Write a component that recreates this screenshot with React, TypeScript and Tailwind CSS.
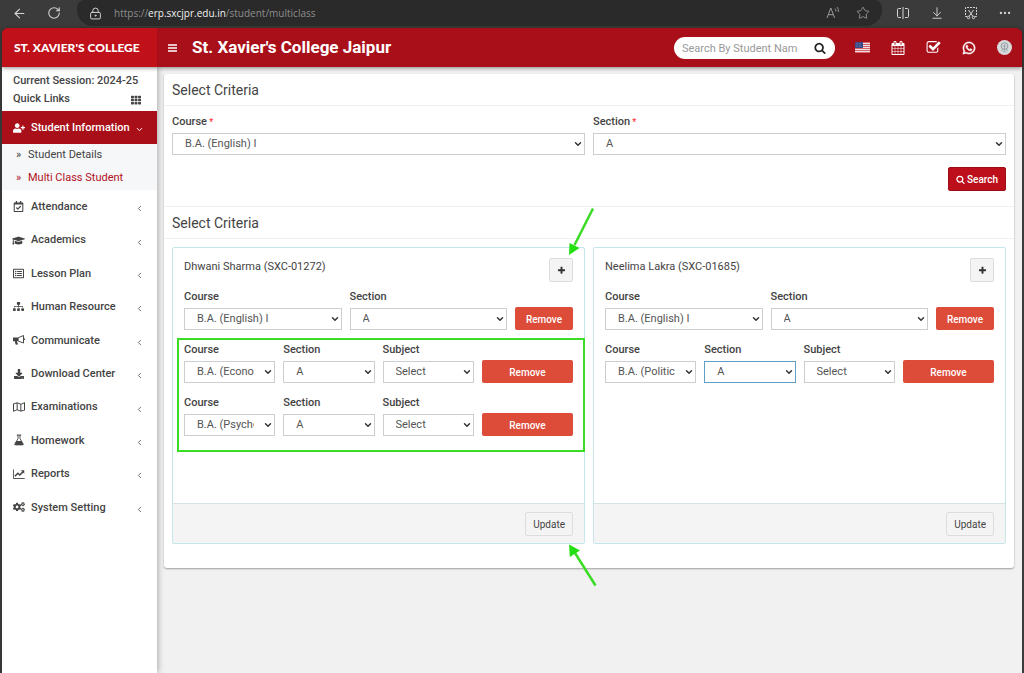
import { useId, useState, type ReactNode } from "react";
import { ArrowDownToLine, ArrowLeft, ChevronDown, ChevronLeft, Ellipsis, LockKeyhole, RotateCw, Star } from "lucide-react";
import {
  FaCogs,
  FaDownload,
  FaGraduationCap,
  FaRegCalendarCheck,
  FaRegListAlt,
  FaRegMap,
  FaSitemap,
  FaTh,
  FaUserPlus,
  FaWhatsapp,
} from "react-icons/fa";

type ClassRow = { course: string; section: string; focused?: boolean };
type Student = { name: string; code: string; extra: ClassRow[]; marked?: boolean };

const students: Student[] = [
  {
    name: "Dhwani Sharma",
    code: "SXC-01272",
    marked: true,
    extra: [
      { course: "B.A. (Economics) I", section: "A" },
      { course: "B.A. (Psychology) I", section: "A" },
    ],
  },
  {
    name: "Neelima Lakra",
    code: "SXC-01685",
    extra: [{ course: "B.A. (Political Science) I", section: "A", focused: true }],
  },
];

/* Icons */

function Glyph({ d, className }: { d: string; className: string }) {
  return (
    <svg viewBox="0 0 1792 1792" fill="currentColor" className={className} aria-hidden="true">
      <path d={d} />
    </svg>
  );
}

const searchPath =
  "M1216 832q0-185-131.5-316.5t-316.5-131.5-316.5 131.5-131.5 316.5 131.5 316.5 316.5 131.5 316.5-131.5 131.5-316.5zm512 832q0 52-38 90t-90 38q-54 0-90-38l-343-342q-179 124-399 124-143 0-273.5-55.5t-225-150-150-225-55.5-273.5 55.5-273.5 150-225 225-150 273.5-55.5 273.5 55.5 225 150 150 225 55.5 273.5q0 220-124 399l343 343q37 37 37 90z";
const plusPath =
  "M1600 736v192q0 40-28 68t-68 28h-416v416q0 40-28 68t-68 28h-192q-40 0-68-28t-28-68v-416h-416q-40 0-68-28t-28-68v-192q0-40 28-68t68-28h416v-416q0-40 28-68t68-28h192q40 0 68 28t28 68v416h416q40 0 68 28t28 68z";
const calendarPath =
  "M192 1664h288v-288h-288v288zm352 0h320v-288h-320v288zm-352-352h288v-320h-288v320zm352 0h320v-320h-320v320zm-352-384h288v-288h-288v288zm736 736h320v-288h-320v288zm-384-736h320v-288h-320v288zm768 736h288v-288h-288v288zm-384-352h320v-320h-320v320zm-352-864v-288q0-13-9.5-22.5t-22.5-9.5h-64q-13 0-22.5 9.5t-9.5 22.5v288q0 13 9.5 22.5t22.5 9.5h64q13 0 22.5-9.5t9.5-22.5zm736 864h288v-320h-288v320zm-384-384h320v-288h-320v288zm384 0h288v-288h-288v288zm32-480v-288q0-13-9.5-22.5t-22.5-9.5h-64q-13 0-22.5 9.5t-9.5 22.5v288q0 13 9.5 22.5t22.5 9.5h64q13 0 22.5-9.5t9.5-22.5zm384-64v1280q0 52-38 90t-90 38h-1408q-52 0-90-38t-38-90v-1280q0-52 38-90t90-38h128v-96q0-66 47-113t113-47h64q66 0 113 47t47 113v96h384v-96q0-66 47-113t113-47h64q66 0 113 47t47 113v96h128q52 0 90 38t38 90z";
const checkPath =
  "M1472 930v318q0 119-84.5 203.5t-203.5 84.5h-832q-119 0-203.5-84.5t-84.5-203.5v-832q0-119 84.5-203.5t203.5-84.5h832q63 0 117 25 15 7 18 23 3 17-9 29l-49 49q-10 10-23 10-3 0-9-2-23-6-45-6h-832q-66 0-113 47t-47 113v832q0 66 47 113t113 47h832q66 0 113-47t47-113v-254q0-13 9-22l64-64q10-10 23-10 6 0 12 3 20 8 20 29zm231-489l-814 814q-24 24-57 24t-57-24l-430-430q-24-24-24-57t24-57l110-110q24-24 57-24t57 24l263 263 647-647q24-24 57-24t57 24l110 110q24 24 24 57t-24 57z";

function MegaphoneIcon() {
  return (
    <svg viewBox="0 0 16 16" className="size-3" fill="none" stroke="currentColor">
      <path d="M7 5 14 2v10L7 9.500" strokeWidth="1.300" strokeLinejoin="round" />
      <path d="M0 4.500h7.500v5H5.200l.6 2.200 1 1.600c-.7 1.200-2.700 1.200-3.500.4L2.500 9.500H0z" fill="currentColor" stroke="none" />
      <path d="M15.200 6v2" strokeWidth="1.500" />
    </svg>
  );
}

function FlaskIcon() {
  return (
    <svg viewBox="0 0 16 16" className="size-3">
      <path
        d="M5.500 1.500h5M6.700 1.500v4.700L2.800 12.700q-.8 1.700 1 1.800h8.400q1.800-.1 1-1.800L9.300 6.200V1.500"
        fill="none"
        stroke="currentColor"
        strokeWidth="1.200"
        strokeLinecap="round"
      />
      <path d="M4.700 9.200h6.600l3 5.300H1.700z" fill="currentColor" />
    </svg>
  );
}

function LineChartIcon() {
  return (
    <svg viewBox="0 0 16 16" className="size-3" fill="none" stroke="currentColor">
      <path d="M.6 2v12h15" strokeWidth="1.200" />
      <path d="m2.500 11 4-4 2.500 2.400 4.600-4.600" strokeWidth="2" />
      <path d="M10.500 3H15v4.500z" fill="currentColor" stroke="none" />
    </svg>
  );
}

function FlagIcon() {
  return (
    <svg viewBox="0 0 15 11" className="h-[11px] w-[15px]" aria-hidden="true">
      <rect width="15" height="11" fill="#eedfe2" />
      <path d="M0 .5h15M0 2.500h15M0 4.500h15M0 6.500h15M0 8.500h15M0 10.500h15" stroke="#d3545f" strokeWidth=".9" />
      <rect width="8" height="6" fill="#3b4a86" />
      <path d="M1 1.500h6M1 3h6M1 4.500h6" stroke="#8490b8" strokeWidth=".6" strokeDasharray=".7 .8" />
    </svg>
  );
}

function AvatarIcon() {
  return (
    <svg viewBox="0 0 16 16" className="size-[15px]" aria-hidden="true">
      <circle cx="8" cy="8" r="8" fill="#d9dadb" />
      <circle cx="8" cy="6.500" r="3.600" fill="none" stroke="#8b979c" />
      <path d="M8 4.500v7M6 6.500h4M5 12l1-3M11 12l-1-3M6.500 12.500h3" stroke="#8fa3a8" strokeWidth=".9" />
    </svg>
  );
}

function ReadAloudIcon() {
  return (
    <svg viewBox="0 0 14 14" className="size-[14px]" fill="none" stroke="currentColor">
      <path d="m1 12 3.800-10L8.600 12M2.300 8.700h5" />
      <path d="M9 2.500q1.200 1.200.8 3M11 1q2 2 1.300 5" strokeWidth=".9" />
    </svg>
  );
}

function SplitIcon() {
  return (
    <svg viewBox="0 0 14 14" className="size-[14px]" fill="none" stroke="currentColor">
      <path d="M5 2.500H2.500q-1 0-1 1v7q0 1 1 1H5M9 2.500h2.500q1 0 1 1v7q0 1-1 1H9M7 1v12" />
    </svg>
  );
}

function CaptureIcon() {
  return (
    <svg viewBox="0 0 14 14" className="size-[14px]" fill="none" stroke="currentColor">
      <path d="M3 10.500H1.500v-9h11v9H11" strokeDasharray="2 1" />
      <path d="m4.500 4 4.500 6.500M9.500 4 5 10.500" />
      <circle cx="4.500" cy="11.500" r="1.200" />
      <circle cx="9.500" cy="11.500" r="1.200" />
    </svg>
  );
}

/* Layout parts */

const menu: { label: string; icon: ReactNode }[] = [
  { label: "Attendance", icon: <FaRegCalendarCheck className="size-[11px]" /> },
  { label: "Academics", icon: <FaGraduationCap className="size-[13px]" /> },
  { label: "Lesson Plan", icon: <FaRegListAlt className="size-[11px]" /> },
  { label: "Human Resource", icon: <FaSitemap className="size-[11px]" /> },
  { label: "Communicate", icon: <MegaphoneIcon /> },
  { label: "Download Center", icon: <FaDownload className="size-[10px]" /> },
  { label: "Examinations", icon: <FaRegMap className="size-3" /> },
  { label: "Homework", icon: <FlaskIcon /> },
  { label: "Reports", icon: <LineChartIcon /> },
  { label: "System Setting", icon: <FaCogs className="size-3" /> },
];

function BrowserBar() {
  return (
    <div className="flex h-7 items-start bg-[#3b3b3b] text-[#d6d6d6]">
      <div className="flex h-[26px] w-[77px] items-center gap-5 pl-3">
        <button aria-label="Back"><ArrowLeft size={15} strokeWidth={1.7} /></button>
        <button aria-label="Reload"><RotateCw size={14} strokeWidth={1.8} /></button>
      </div>
      <div className="flex h-[26px] flex-1 items-center rounded-b-2xl rounded-t-lg bg-[#2a2a2a] pl-3 pr-3">
        <LockKeyhole size={13} strokeWidth={1.8} />
        <div className="ml-3 flex-1 font-['Open_Sans',sans-serif] text-[10px] text-[#8e8e8e]">
          https://<span className="text-[#f0f0f0]">erp.sxcjpr.edu.in</span>/student/multiclass
        </div>
        <div className="flex items-center gap-4 text-[#9a9a9a]">
          <button aria-label="Read aloud"><ReadAloudIcon /></button>
          <button aria-label="Favorite"><Star size={14} strokeWidth={1.5} /></button>
        </div>
      </div>
      <div className="flex h-[26px] items-center gap-5 pl-[14px] pr-3">
        <button aria-label="Split screen"><SplitIcon /></button>
        <button aria-label="Downloads"><ArrowDownToLine size={14} strokeWidth={1.6} /></button>
        <button aria-label="Screenshot"><CaptureIcon /></button>
        <button aria-label="More"><Ellipsis size={14} /></button>
      </div>
    </div>
  );
}

function TopBar() {
  return (
    <header className="relative z-10 flex h-[39px] rounded-t-md bg-[#a90f19] text-white shadow-[0_1px_4px_rgba(0,0,0,0.45)]">
      <a
        href="#home"
        className="flex w-[155px] shrink-0 items-center rounded-tl-md bg-[#c01019] pl-3 font-['Lato',sans-serif] text-xs font-black"
      >
        ST. XAVIER'S COLLEGE
      </a>
      <button aria-label="Toggle menu" className="flex w-[35px] items-center pl-[11px]">
        <svg viewBox="0 0 9 8" className="h-2 w-[9px]" stroke="currentColor" strokeWidth="1.500">
          <path d="M0 1h9M0 4h9M0 7h9" />
        </svg>
      </button>
      <h1 className="flex flex-1 items-center text-[17px] font-bold">St. Xavier's College Jaipur</h1>
      <div className="flex items-center">
        <form className="mr-5 flex h-[22px] w-[161px] items-center rounded-full bg-white px-2" onSubmit={(e) => e.preventDefault()}>
          <input
            type="text"
            aria-label="Search By Student Name"
            placeholder="Search By Student Name, Roll Number"
            className="h-[22px] w-[116px] bg-transparent pt-px text-[11px] text-[#444] outline-none placeholder:text-[#999]"
          />
          <button aria-label="Search" className="ml-auto mr-px text-[#222]">
            <Glyph d={searchPath} className="size-3" />
          </button>
        </form>
        <nav className="flex items-center gap-[21px] pr-[10px]">
          <button aria-label="Language"><FlagIcon /></button>
          <button aria-label="Calendar"><Glyph d={calendarPath} className="size-[14px]" /></button>
          <button aria-label="Tasks"><Glyph d={checkPath} className="size-[15px]" /></button>
          <button aria-label="WhatsApp"><FaWhatsapp size={14} stroke="currentColor" strokeWidth={20} /></button>
          <button aria-label="Profile"><AvatarIcon /></button>
        </nav>
      </div>
    </header>
  );
}

function Sidebar() {
  return (
    <aside className="w-[155px] shrink-0 bg-white font-medium text-[#444] shadow-[1px_0_6px_rgba(0,0,0,0.3)]">
      <div className="px-[11px] pt-1">
        <p className="leading-[19px]">Current Session: 2024-25</p>
        <div className="flex h-[19px] items-center justify-between">
          <span>Quick Links</span>
          <button aria-label="Quick links" className="mr-[5px]"><FaTh size={10} /></button>
        </div>
      </div>
      <a href="#students" className="mt-[2px] flex h-[33px] items-center bg-[#a90f19] pl-[11px] pr-[13px] text-white">
        <FaUserPlus className="size-3" />
        <span className="ml-[6px] flex-1 pt-px">Student Information</span>
        <ChevronDown size={9} strokeWidth={2.5} className="mt-1" />
      </a>
      <ul className="grid h-[46px] grid-rows-2 bg-[#f5f7f9] font-normal">
        <li className="flex items-center">
          <a href="#details" className="flex items-center pl-[14px]"><span className="w-3">»</span>Student Details</a>
        </li>
        <li className="flex items-center">
          <a href="#multiclass" className="flex items-center pl-[14px] text-[#b3121d]"><span className="w-3">»</span>Multi Class Student</a>
        </li>
      </ul>
      <ul className="grid h-[334px] auto-rows-fr">
        {menu.map((item) => (
          <li key={item.label} className="flex">
            <a href={`#${item.label.toLowerCase().replace(" ", "-")}`} className="flex flex-1 items-center pl-[10px] pr-[13px]">
              <span className="flex w-[13px] justify-center">{item.icon}</span>
              <span className="ml-[6px] flex-1 pt-px">{item.label}</span>
              <ChevronLeft size={9} strokeWidth={2} className="mt-1" />
            </a>
          </li>
        ))}
      </ul>
    </aside>
  );
}

type SelectFieldProps = { label: string; value: string; required?: boolean; focused?: boolean };

function SelectField({ label, value, required, focused }: SelectFieldProps) {
  const id = useId();
  return (
    <div className="min-w-0 flex-1">
      <label htmlFor={id} className="block h-[18px] font-medium leading-[14px]">
        {label}
        {required && <span className="text-[9px] text-red-500"> *</span>}
      </label>
      <div className="relative">
        <select
          id={id}
          defaultValue={value}
          className={`block h-[22px] w-full appearance-none border bg-white pl-3 pr-5 text-[#555] outline-none ${
            focused ? "border-[#5f9fc9]" : "border-[#ccced2]"
          }`}
        >
          <option>{value}</option>
        </select>
        <ChevronDown size={10} strokeWidth={3.5} className="pointer-events-none absolute right-[2px] top-[6px] text-[#333]" />
      </div>
    </div>
  );
}

function RemoveButton({ className = "", onClick }: { className?: string; onClick?: () => void }) {
  return (
    <button
      onClick={onClick}
      className={`h-[23px] self-end rounded-[2px] bg-[#dd4b39] pt-px text-[10px] font-medium text-white ${className}`}
    >
      Remove
    </button>
  );
}

function Arrow({ className, flip }: { className: string; flip?: boolean }) {
  return (
    <svg viewBox="0 0 30 50" className={`pointer-events-none absolute z-10 h-[50px] w-[30px] ${className}`} aria-hidden="true">
      {flip ? (
        <>
          <path d="M28.500 44.500 8 12" stroke="#3bdc24" strokeWidth="2.500" />
          <path d="M2 3.500 2.800 16 13 9.500z" fill="#22e010" />
        </>
      ) : (
        <>
          <path d="M25 1.500 6.500 38" stroke="#3bdc24" strokeWidth="2.500" />
          <path d="M1 48 1.500 36l10 5z" fill="#22e010" />
        </>
      )}
    </svg>
  );
}

function StudentCard({ student }: { student: Student }) {
  const [rows, setRows] = useState(student.extra);

  return (
    <section className="relative flex min-h-[297px] flex-col rounded-[2px] border border-[#c5e6ea]">
      <div className="flex-1 px-[11px] pt-[10px]">
        <div className="flex h-6 items-start justify-between">
          <h3 className="pt-px leading-4">{student.name} ({student.code})</h3>
          <button
            aria-label="Add class"
            onClick={() => setRows([...rows, { course: "Select", section: "Select" }])}
            className="flex size-6 items-center justify-center rounded-[2px] border border-[#ddd] bg-[#f4f4f4] text-[#333]"
          >
            <Glyph d={plusPath} className="size-[9px]" />
          </button>
        </div>
        <div className="mt-2 flex gap-2">
          <SelectField label="Course" value="B.A. (English) I" />
          <SelectField label="Section" value="A" />
          <RemoveButton className="w-[58px]" />
        </div>
        <div className="relative mt-[13px] space-y-[13px]">
          {rows.map((row, i) => (
            <div key={i} className="grid grid-cols-4 gap-2">
              <SelectField label="Course" value={row.course} />
              <SelectField label="Section" value={row.section} focused={row.focused} />
              <SelectField label="Subject" value="Select" />
              <RemoveButton onClick={() => setRows(rows.filter((_, n) => n !== i))} />
            </div>
          ))}
          {student.marked && (
            <div className="pointer-events-none absolute -bottom-4 -left-[7px] -right-3 -top-[5px] border-2 border-[#3bdc24]" />
          )}
        </div>
      </div>
      <footer className="flex h-10 items-center justify-end border-t border-[#d5e3e6] bg-[#f4f4f4] px-[11px]">
        <button className="h-6 rounded-[2px] border border-[#ddd] bg-[#f4f4f4] px-[7px] pt-px text-[10px]">Update</button>
      </footer>
      {student.marked && (
        <>
          <Arrow className="-right-[14px] -top-[41px]" />
          <Arrow flip className="-bottom-12 -right-[13px]" />
        </>
      )}
    </section>
  );
}

export default function App() {
  return (
    <div className="flex min-h-screen flex-col bg-[#3b3b3b] font-['Roboto',sans-serif] text-[11px] text-[#444]">
      <BrowserBar />
      <div className="mx-[2px] flex flex-1 flex-col">
        <TopBar />
        <div className="flex flex-1 bg-[#f1f1f1]">
          <Sidebar />
          <main className="flex-1 py-[7px] pl-[7px] pr-2">
            <div className="rounded-[3px] bg-white shadow-[0_1px_2px_rgba(0,0,0,0.35)]">
              <h2 className="flex h-8 items-center border-b border-[#f1f1f1] px-2 text-sm">Select Criteria</h2>
              <form className="px-2 pb-[15px] pt-[9px]" onSubmit={(e) => e.preventDefault()}>
                <div className="flex gap-2">
                  <SelectField label="Course" value="B.A. (English) I" required />
                  <SelectField label="Section" value="A" required />
                </div>
                <div className="mt-3 flex justify-end">
                  <button className="flex h-6 items-center gap-[2px] rounded-[2px] border border-[#9c0d16] bg-[#bd0f1b] px-[7px] text-[10px] font-medium text-white">
                    <Glyph d={searchPath} className="size-[9px]" />
                    Search
                  </button>
                </div>
              </form>
              <h2 className="flex h-[33px] items-center border-y border-[#f1f1f1] px-2 text-sm">Select Criteria</h2>
              <div className="grid grid-cols-2 gap-2 px-2 pb-6 pt-2">
                {students.map((student) => (
                  <StudentCard key={student.code} student={student} />
                ))}
              </div>
            </div>
          </main>
        </div>
      </div>
    </div>
  );
}
